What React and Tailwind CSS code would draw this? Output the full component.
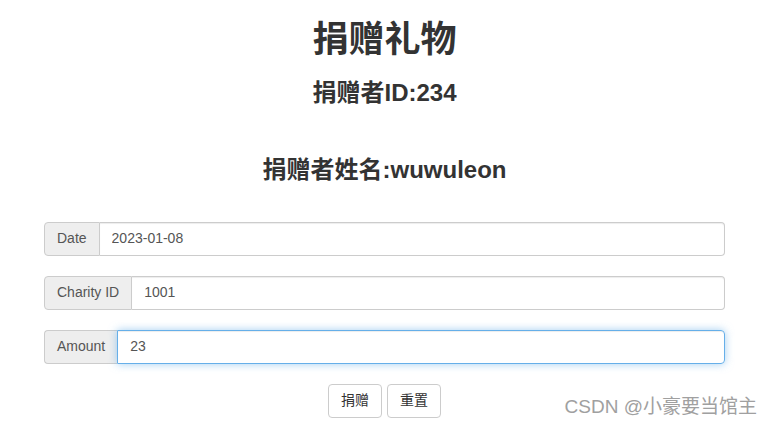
export default function App() {
  const sans = "font-['Liberation_Sans','Noto_Sans_CJK_SC',sans-serif]"

  return (
    <div className={`relative h-[426px] w-full overflow-hidden bg-white text-[#333] ${sans}`}>
      <div className="ml-[44px] w-[681px] text-center">
        <h1 className="pt-[20px] text-[36px] font-bold leading-[39.6px]">捐赠礼物</h1>
        <h3 className="mt-[20px] text-[24px] font-bold leading-[26.4px]">捐赠者ID:234</h3>
        <h3 className="mt-[50.6px] text-[24px] font-bold leading-[26.4px]">捐赠者姓名:wuwuleon</h3>

        <form className="mt-[38.6px] flex flex-col gap-[20px] text-left text-[14px]">
          <div className="flex h-[34px]">
            <span className="flex items-center rounded-l-[4px] border border-[#ccc] bg-[#eee] px-[12px] text-[#555]">Date</span>
            <input
              className="flex-1 rounded-r-[4px] border border-l-0 border-[#ccc] px-[12px] text-[#555] shadow-[inset_0_1px_1px_rgba(0,0,0,0.075)] outline-none"
              defaultValue="2023-01-08"
            />
          </div>
          <div className="flex h-[34px]">
            <span className="flex items-center rounded-l-[4px] border border-[#ccc] bg-[#eee] px-[12px] text-[#555]">Charity ID</span>
            <input
              className="flex-1 rounded-r-[4px] border border-l-0 border-[#ccc] px-[12px] text-[#555] shadow-[inset_0_1px_1px_rgba(0,0,0,0.075)] outline-none"
              defaultValue="1001"
            />
          </div>
          <div className="flex h-[34px]">
            <span className="flex items-center rounded-l-[4px] border border-r-0 border-[#ccc] bg-[#eee] px-[12px] text-[#555]">Amount</span>
            <input
              className="flex-1 rounded-r-[4px] border border-[#66afe9] px-[12px] text-[#555] shadow-[inset_0_1px_1px_rgba(0,0,0,0.075),0_0_8px_rgba(102,175,233,0.6)] outline-none"
              defaultValue="23"
            />
          </div>
        </form>

        <div className="mt-[20px] flex justify-center gap-[5px] text-[14px]">
          <button className="h-[34px] rounded-[4px] border border-[#ccc] bg-white px-[12px] text-[#333]">捐赠</button>
          <button className="h-[34px] rounded-[4px] border border-[#ccc] bg-white px-[12px] text-[#333]">重置</button>
        </div>
      </div>

      <div className="absolute bottom-[6px] right-[15px] text-[19px] leading-[26px] text-[#a0a0a0]">CSDN @小豪要当馆主</div>
    </div>
  )
}
